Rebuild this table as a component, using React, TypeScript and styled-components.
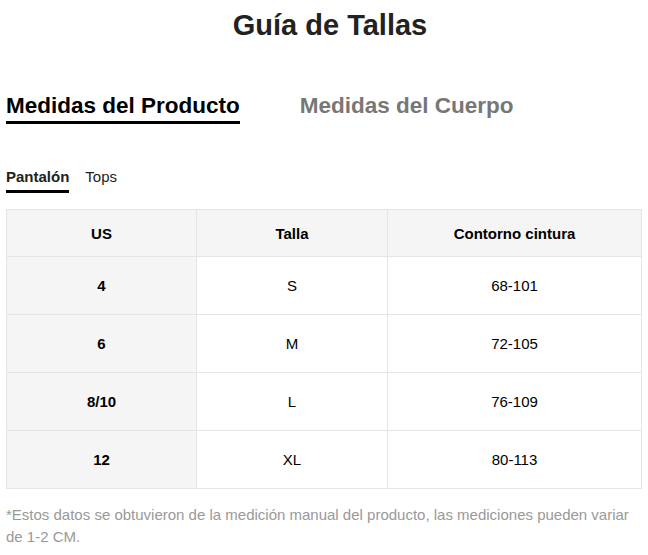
import styled, { createGlobalStyle } from 'styled-components'

const GlobalStyle = createGlobalStyle`
  body {
    margin: 0;
    background: #fff;
    font-family: "Liberation Sans", Arial, sans-serif;
    color: #000;
  }
`

const rows = [
  { us: '4', talla: 'S', cintura: '68-101' },
  { us: '6', talla: 'M', cintura: '72-105' },
  { us: '8/10', talla: 'L', cintura: '76-109' },
  { us: '12', talla: 'XL', cintura: '80-113' },
]

function App() {
  return (
    <Page>
      <GlobalStyle />
      <Title>Guía de Tallas</Title>
      <MainTabs>
        <MainTab $active>Medidas del Producto</MainTab>
        <MainTab>Medidas del Cuerpo</MainTab>
      </MainTabs>
      <SubTabs>
        <SubTab $active>Pantalón</SubTab>
        <SubTab>Tops</SubTab>
      </SubTabs>
      <SizeTable>
        <colgroup>
          <col style={{ width: 190 }} />
          <col style={{ width: 191 }} />
          <col />
        </colgroup>
        <thead>
          <tr>
            <HeadCell>US</HeadCell>
            <HeadCell>Talla</HeadCell>
            <HeadCell>Contorno cintura</HeadCell>
          </tr>
        </thead>
        <tbody>
          {rows.map((r) => (
            <tr key={r.us}>
              <Cell $first>{r.us}</Cell>
              <Cell>{r.talla}</Cell>
              <Cell>{r.cintura}</Cell>
            </tr>
          ))}
        </tbody>
      </SizeTable>
      <Note>
        *Estos datos se obtuvieron de la medición manual del producto, las mediciones pueden variar de 1-2 CM.
      </Note>
    </Page>
  )
}

const Page = styled.div`
  width: 636px;
  padding: 0 6px;
`

const Title = styled.h1`
  margin: 0;
  padding: 9px 0 0 12px;
  font-size: 29px;
  line-height: 32px;
  font-weight: bold;
  text-align: center;
  color: #222;
`

const MainTabs = styled.div`
  display: flex;
  gap: 60px;
  margin-top: 52px;
`

const MainTab = styled.div<{ $active?: boolean }>`
  font-size: 22.5px;
  font-weight: bold;
  line-height: 26px;
  padding-bottom: 2px;
  color: ${(p) => (p.$active ? '#000' : '#777')};
  border-bottom: 3px solid ${(p) => (p.$active ? '#000' : 'transparent')};
`

const SubTabs = styled.div`
  display: flex;
  gap: 16px;
  margin-top: 44px;
`

const SubTab = styled.div<{ $active?: boolean }>`
  font-size: 15px;
  line-height: 18px;
  padding-bottom: 4px;
  font-weight: ${(p) => (p.$active ? 'bold' : 'normal')};
  color: #222;
  border-bottom: 3px solid ${(p) => (p.$active ? '#000' : 'transparent')};
`

const SizeTable = styled.table`
  width: 100%;
  margin-top: 16px;
  border-collapse: collapse;
  table-layout: fixed;
  border: 1px solid #e5e5e5;
`

const HeadCell = styled.th`
  height: 46px;
  padding: 0;
  background: #f5f5f5;
  border: 1px solid #e5e5e5;
  font-size: 15px;
  font-weight: bold;
  text-align: center;
`

const Cell = styled.td<{ $first?: boolean }>`
  height: 57px;
  padding: 0;
  border: 1px solid #e5e5e5;
  font-size: 15px;
  text-align: center;
  background: ${(p) => (p.$first ? '#f5f5f5' : '#fff')};
  font-weight: ${(p) => (p.$first ? 'bold' : 'normal')};
`

const Note = styled.p`
  margin: 15px 0 0;
  font-size: 15px;
  line-height: 22px;
  color: #999;
`

export default App
